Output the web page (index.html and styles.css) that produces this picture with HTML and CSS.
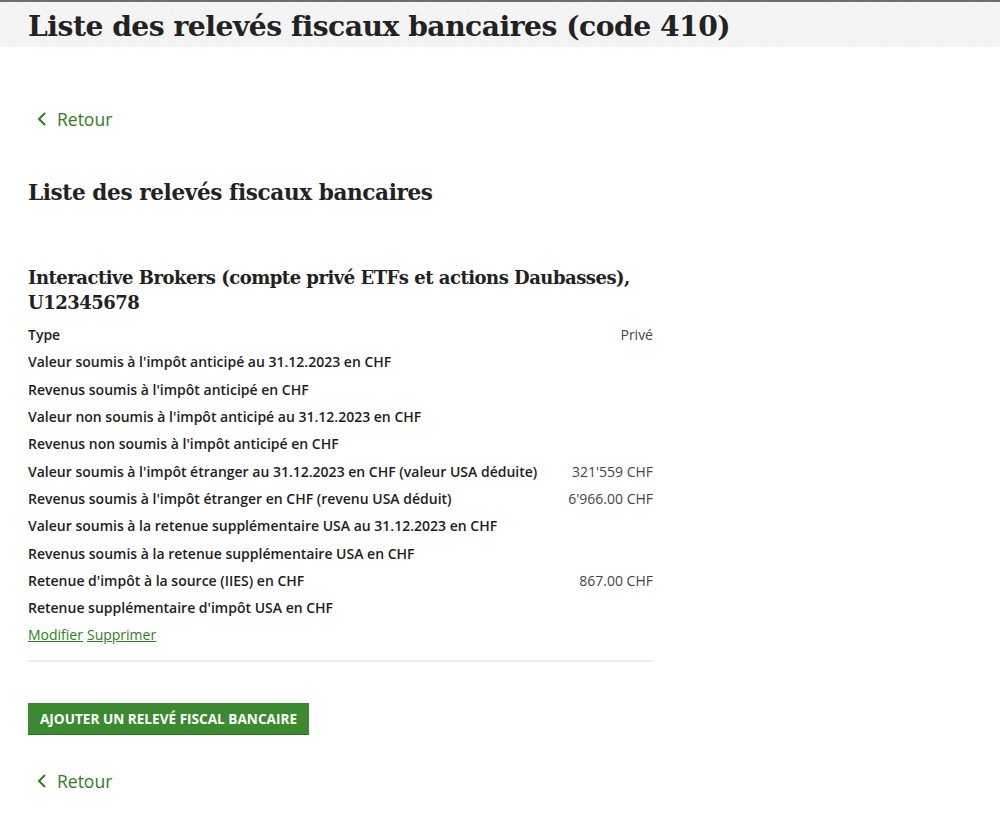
FILE: index.html
```html
<!DOCTYPE html>
<html lang="fr">
<head>
<meta charset="utf-8">
<title>Liste des relevés fiscaux bancaires</title>
<link rel="stylesheet" href="styles.css">
</head>
<body>
<header class="topbar">
  <h1 class="page-title">Liste des relevés fiscaux bancaires (code 410)</h1>
</header>
<main class="content">
  <a class="back" href="#"><svg class="chev" viewBox="0 0 10 16" width="10" height="16"><path d="M8 2 L2 8 L8 14" fill="none" stroke="currentColor" stroke-width="2"/></svg><span>Retour</span></a>
  <h2 class="section-title">Liste des relevés fiscaux bancaires</h2>
  <section class="statement">
    <h3 class="statement-title">Interactive Brokers (compte privé ETFs et actions Daubasses), U12345678</h3>
    <dl class="rows">
      <div class="row"><dt>Type</dt><dd>Privé</dd></div>
      <div class="row"><dt>Valeur soumis à l'impôt anticipé au 31.12.2023 en CHF</dt><dd></dd></div>
      <div class="row"><dt>Revenus soumis à l'impôt anticipé en CHF</dt><dd></dd></div>
      <div class="row"><dt>Valeur non soumis à l'impôt anticipé au 31.12.2023 en CHF</dt><dd></dd></div>
      <div class="row"><dt>Revenus non soumis à l'impôt anticipé en CHF</dt><dd></dd></div>
      <div class="row"><dt>Valeur soumis à l'impôt étranger au 31.12.2023 en CHF (valeur USA déduite)</dt><dd>321'559 CHF</dd></div>
      <div class="row"><dt>Revenus soumis à l'impôt étranger en CHF (revenu USA déduit)</dt><dd>6'966.00 CHF</dd></div>
      <div class="row"><dt>Valeur soumis à la retenue supplémentaire USA au 31.12.2023 en CHF</dt><dd></dd></div>
      <div class="row"><dt>Revenus soumis à la retenue supplémentaire USA en CHF</dt><dd></dd></div>
      <div class="row"><dt>Retenue d'impôt à la source (IIES) en CHF</dt><dd>867.00 CHF</dd></div>
      <div class="row"><dt>Retenue supplémentaire d'impôt USA en CHF</dt><dd></dd></div>
    </dl>
    <div class="actions"><a href="#">Modifier</a> <a href="#">Supprimer</a></div>
  </section>
  <button class="btn-add" type="button">Ajouter un relevé fiscal bancaire</button>
  <a class="back back-bottom" href="#"><svg class="chev" viewBox="0 0 10 16" width="10" height="16"><path d="M8 2 L2 8 L8 14" fill="none" stroke="currentColor" stroke-width="2"/></svg><span>Retour</span></a>
</main>
</body>
</html>
```
FILE: styles.css
```css
html, body {
  margin: 0;
  padding: 0;
  background: #fff;
}
body {
  font-family: "Open Sans", "Noto Sans", sans-serif;
  color: #222;
}
.topbar {
  border-top: 2px solid #6e6e6e;
  background-color: #f5f5f5;
  background-image: repeating-linear-gradient(45deg, rgba(0,0,0,0.015) 0 1px, transparent 1px 3px);
  height: 45px;
  padding: 0 28px;
  box-sizing: content-box;
}
.page-title {
  margin: 0;
  font-family: "DejaVu Serif", serif;
  font-weight: bold;
  font-size: 28.2px;
  line-height: 50px;
  letter-spacing: -0.5px;
  color: #222;
  white-space: nowrap;
}
.content {
  padding: 0 28px;
  width: 625px;
}
.back {
  display: inline-flex;
  align-items: center;
  gap: 10px;
  color: #2f7d1f;
  text-decoration: none;
  font-size: 17.5px;
  margin-top: 60px;
  padding-left: 9px;
  height: 24px;
}
.back-bottom {
  margin-top: 34px;
}
.chev {
  display: block;
}
.section-title {
  margin: 46px 0 0;
  font-family: "DejaVu Serif", serif;
  font-weight: bold;
  font-size: 21.6px;
  line-height: 30px;
  letter-spacing: -0.4px;
  color: #222;
}
.statement {
  margin-top: 57px;
  border-bottom: 2px solid #eeeeee;
  padding-bottom: 12px;
}
.statement-title {
  margin: 0 0 6px;
  font-family: "DejaVu Serif", serif;
  font-weight: 600;
  font-size: 18px;
  line-height: 25px;
  letter-spacing: -0.5px;
  color: #222;
}
.rows {
  margin: 0;
}
.row {
  display: flex;
  justify-content: space-between;
  height: 27.3px;
  align-items: center;
  font-size: 14px;
}
.row dt {
  font-weight: 600;
  color: #1e1e1e;
}
.row dd {
  margin: 0;
  color: #444;
}
.actions {
  font-size: 14px;
  height: 27px;
  display: flex;
  align-items: center;
  gap: 4px;
}
.actions a {
  color: #2f7d1f;
  text-decoration: underline;
}
.btn-add {
  display: block;
  margin-top: 41px;
  background: #3b8a2f;
  color: #fff;
  border: 0;
  border-bottom: 1px solid #2e6e25;
  font-family: "Open Sans", sans-serif;
  font-weight: 700;
  font-size: 13.6px;
  text-transform: uppercase;
  height: 32px;
  width: 281px;
  padding: 0;
  letter-spacing: 0;
}
```
